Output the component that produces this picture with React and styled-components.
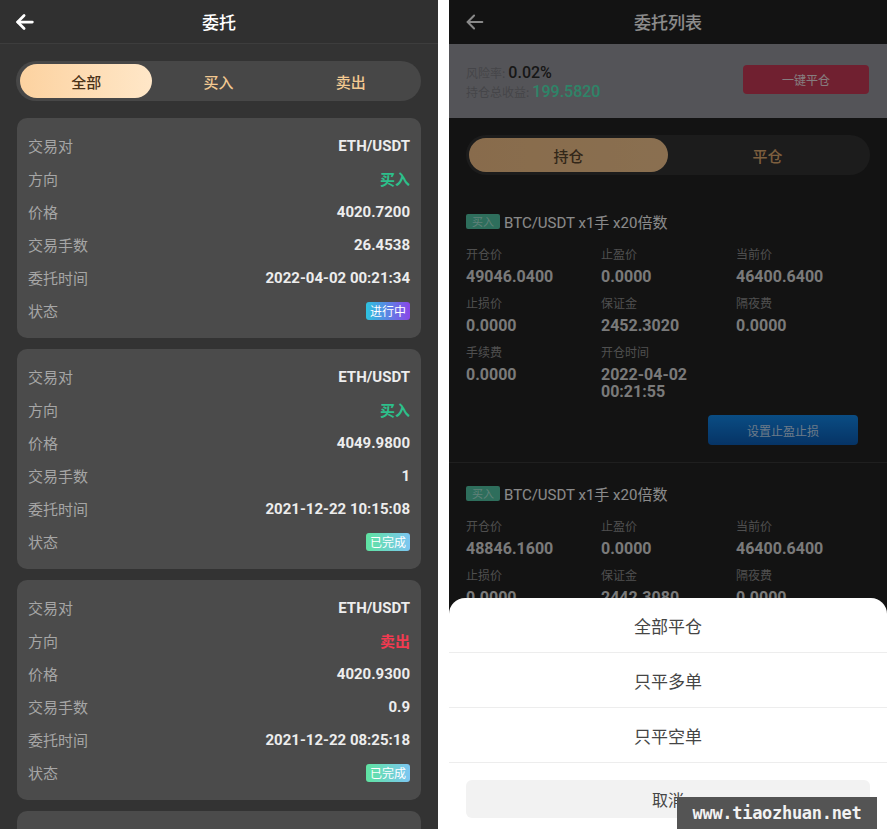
import React from "react";
import styled, { createGlobalStyle } from "styled-components";

const GlobalStyle = createGlobalStyle`
  html, body {
    margin: 0;
    padding: 0;
    background: #ffffff;
  }
  body {
    font-family: Roboto, "Noto Sans CJK SC", sans-serif;
  }
  * {
    box-sizing: border-box;
  }
`;

const Page = styled.div`
  display: flex;
  gap: 11px;
  width: 887px;
  height: 829px;
  overflow: hidden;
`;

/* ---------- left screen ---------- */

const LeftScreen = styled.div`
  width: 438px;
  height: 829px;
  background: #333333;
  overflow: hidden;
  display: flex;
  flex-direction: column;
`;

const Header = styled.div`
  height: 44px;
  flex-shrink: 0;
  position: relative;
  display: flex;
  align-items: center;
  justify-content: center;
  background: ${(p) => p.$bg};
  border-bottom: 1px solid ${(p) => p.$line};
`;

const BackButton = styled.div`
  position: absolute;
  left: ${(p) => p.$left}px;
  top: 11px;
  display: flex;
`;

const Title = styled.div`
  font-family: "Noto Sans CJK SC", sans-serif;
  font-size: 17px;
  font-weight: 500;
  color: ${(p) => p.$color};
`;

const LeftBody = styled.div`
  padding: 17px 17px 0 17px;
  display: flex;
  flex-direction: column;
`;

const FilterBar = styled.div`
  height: 40px;
  border-radius: 20px;
  background: #474747;
  padding: 3px 4px;
  display: grid;
  grid-template-columns: repeat(3, 1fr);
  margin-bottom: 17px;
  margin-left: -1px;
`;

const FilterTab = styled.div`
  display: flex;
  align-items: center;
  justify-content: center;
  border-radius: 17px;
  font-family: "Noto Sans CJK SC", sans-serif;
  font-size: 15px;
  font-weight: 500;
  color: ${(p) => (p.$active ? "#4a3218" : "#f3c991")};
  background: ${(p) =>
    p.$active ? "linear-gradient(90deg, #fcd2a0 0%, #ffe7c8 100%)" : "transparent"};
`;

const CardList = styled.div`
  display: flex;
  flex-direction: column;
  gap: 11px;
`;

const Card = styled.div`
  background: #4b4b4b;
  border-radius: 10px;
  padding: 11px 11px;
  flex-shrink: 0;
`;

const Row = styled.div`
  height: 33px;
  display: flex;
  align-items: center;
  justify-content: space-between;
`;

const Label = styled.span`
  font-family: "Noto Sans CJK SC", sans-serif;
  font-size: 15px;
  color: #a6a6a6;
`;

const Value = styled.span`
  font-family: Roboto, "Noto Sans CJK SC", sans-serif;
  font-size: 15px;
  font-weight: 700;
  color: ${(p) => p.$color || "#ededed"};
`;

const Badge = styled.span`
  height: 18px;
  padding: 0 4px;
  border-radius: 3px;
  display: inline-flex;
  align-items: center;
  font-family: "Noto Sans CJK SC", sans-serif;
  font-size: 12px;
  color: #ffffff;
  background: ${(p) =>
    p.$done
      ? "linear-gradient(90deg, #5fe3a1 0%, #7cc6f2 100%)"
      : "linear-gradient(90deg, #2dc3df 0%, #8b45e8 100%)"};
`;

/* ---------- right screen ---------- */

const RightScreen = styled.div`
  position: relative;
  width: 438px;
  height: 829px;
  background: #232323;
  overflow: hidden;
  display: flex;
  flex-direction: column;
`;

const RiskBox = styled.div`
  height: 74px;
  flex-shrink: 0;
  background: #9a9aa0;
  padding: 0 18px 0 17px;
  display: flex;
  align-items: center;
  justify-content: space-between;
`;

const RiskLines = styled.div`
  display: flex;
  flex-direction: column;
  padding-top: 2px;
`;

const RiskLine = styled.div`
  height: 19px;
  display: flex;
  align-items: center;
  gap: 3px;
`;

const RiskLabel = styled.span`
  font-family: "Noto Sans CJK SC", sans-serif;
  font-size: 12px;
  color: #7e7e85;
`;

const RiskValue = styled.span`
  font-family: Roboto, sans-serif;
  font-size: 16px;
  font-weight: 500;
  color: ${(p) => p.$color};
`;

const CloseAllButton = styled.div`
  width: 126px;
  height: 29px;
  border-radius: 4px;
  background: #cc3b58;
  display: flex;
  align-items: center;
  justify-content: center;
  font-family: "Noto Sans CJK SC", sans-serif;
  font-size: 12px;
  color: #f4e4e8;
  margin-top: -3px;
`;

const PosTabs = styled.div`
  margin: 17px 17px 16px 17px;
  height: 40px;
  border-radius: 20px;
  background: #333333;
  padding: 3px;
  display: grid;
  grid-template-columns: 1fr 1fr;
`;

const PosTab = styled.div`
  display: flex;
  align-items: center;
  justify-content: center;
  border-radius: 17px;
  font-family: "Noto Sans CJK SC", sans-serif;
  font-size: 15px;
  font-weight: 500;
  color: ${(p) => (p.$active ? "#5c472f" : "#e4ae74")};
  background: ${(p) =>
    p.$active ? "linear-gradient(90deg, #f8c48a 0%, #fbcb93 100%)" : "transparent"};
`;

const Position = styled.div`
  padding: 20px 29px 17px 17px;
  border-bottom: 1px solid #3a3a3a;
  display: flex;
  flex-direction: column;
`;

const PosTitle = styled.div`
  height: 20px;
  display: flex;
  align-items: center;
  gap: 4px;
  margin-bottom: 15px;
  font-family: Roboto, "Noto Sans CJK SC", sans-serif;
  font-size: 15px;
  color: #fbfbfb;
`;

const SideTag = styled.span`
  width: 34px;
  height: 15px;
  border-radius: 2px;
  background: #54c8a8;
  display: inline-flex;
  align-items: center;
  justify-content: center;
  font-family: "Noto Sans CJK SC", sans-serif;
  font-size: 11px;
  color: #b0ecdc;
`;

const PosGrid = styled.div`
  display: grid;
  grid-template-columns: 135px 135px 135px;
`;

const Cell = styled.div`
  display: flex;
  flex-direction: column;
  margin-bottom: 10px;
`;

const CellLabel = styled.span`
  font-family: "Noto Sans CJK SC", sans-serif;
  font-size: 12px;
  line-height: 16px;
  color: #909090;
  margin-bottom: 6px;
`;

const CellValue = styled.span`
  font-family: Roboto, sans-serif;
  font-size: 16px;
  font-weight: 700;
  line-height: 17px;
  color: #dedede;
`;

const StopButton = styled.div`
  align-self: flex-end;
  margin-top: 5px;
  width: 150px;
  height: 30px;
  border-radius: 4px;
  background: linear-gradient(180deg, #138cef 0%, #0c5fb9 100%);
  display: flex;
  align-items: center;
  justify-content: center;
  font-family: "Noto Sans CJK SC", sans-serif;
  font-size: 12px;
  color: #c4def8;
`;

const Mask = styled.div`
  position: absolute;
  top: 0;
  left: 0;
  width: 100%;
  height: 100%;
  z-index: 1;
  background-color: rgba(0, 0, 0, 0.45);
`;

const Sheet = styled.div`
  position: absolute;
  left: 0;
  right: 0;
  bottom: 0;
  z-index: 2;
  height: 231px;
  background: #ffffff;
  border-radius: 16px 16px 0 0;
  display: flex;
  flex-direction: column;
`;

const SheetItem = styled.div`
  height: 55px;
  flex-shrink: 0;
  display: flex;
  align-items: center;
  justify-content: center;
  border-bottom: 1px solid #ededed;
  font-family: "Noto Sans CJK SC", sans-serif;
  font-size: 17px;
  color: #454545;
`;

const CancelButton = styled.div`
  margin: 17px 17px 0 17px;
  height: 38px;
  border-radius: 6px;
  background: #f2f2f2;
  display: flex;
  align-items: center;
  justify-content: center;
  font-family: "Noto Sans CJK SC", sans-serif;
  font-size: 16px;
  color: #454545;
`;

const Watermark = styled.div`
  position: absolute;
  right: 10px;
  bottom: 0;
  z-index: 3;
  width: 200px;
  height: 32px;
  background: #545454;
  display: flex;
  align-items: center;
  justify-content: center;
  font-family: "DejaVu Sans Mono", "Liberation Mono", monospace;
  font-size: 17px;
  font-weight: 700;
  color: #f2f2f2;
  letter-spacing: -0.3px;
`;

const ArrowLeft = ({ color, width }) => (
  <svg width="22" height="22" viewBox="0 0 24 24" fill="none" stroke={color} strokeWidth={width} strokeLinecap="round" strokeLinejoin="round">
    <path d="M20 12H4" />
    <path d="M11 5l-7 7 7 7" />
  </svg>
);

const orders = [
  { pair: "ETH/USDT", side: "buy", price: "4020.7200", lots: "26.4538", time: "2022-04-02 00:21:34", done: false },
  { pair: "ETH/USDT", side: "buy", price: "4049.9800", lots: "1", time: "2021-12-22 10:15:08", done: true },
  { pair: "ETH/USDT", side: "sell", price: "4020.9300", lots: "0.9", time: "2021-12-22 08:25:18", done: true },
  { pair: "ETH/USDT", side: "buy", price: "4020.9300", lots: "0.9", time: "2021-12-22 08:20:11", done: true },
];

const positions = [
  {
    open: "49046.0400", profit: "0.0000", now: "46400.6400",
    loss: "0.0000", margin: "2452.3020", night: "0.0000",
    fee: "0.0000", time: "2022-04-02 00:21:55",
  },
  {
    open: "48846.1600", profit: "0.0000", now: "46400.6400",
    loss: "0.0000", margin: "2442.3080", night: "0.0000",
    fee: "0.0000", time: "2022-04-02 00:20:41",
  },
];

const OrderCard = ({ order }) => (
  <Card>
    <Row>
      <Label>交易对</Label>
      <Value>{order.pair}</Value>
    </Row>
    <Row>
      <Label>方向</Label>
      <Value $color={order.side === "buy" ? "#2dc08b" : "#f23a50"}>
        {order.side === "buy" ? "买入" : "卖出"}
      </Value>
    </Row>
    <Row>
      <Label>价格</Label>
      <Value>{order.price}</Value>
    </Row>
    <Row>
      <Label>交易手数</Label>
      <Value>{order.lots}</Value>
    </Row>
    <Row>
      <Label>委托时间</Label>
      <Value>{order.time}</Value>
    </Row>
    <Row>
      <Label>状态</Label>
      <Badge $done={order.done}>{order.done ? "已完成" : "进行中"}</Badge>
    </Row>
  </Card>
);

const PositionItem = ({ pos }) => (
  <Position>
    <PosTitle>
      <SideTag>买入</SideTag>
      BTC/USDT x1手 x20倍数
    </PosTitle>
    <PosGrid>
      <Cell><CellLabel>开仓价</CellLabel><CellValue>{pos.open}</CellValue></Cell>
      <Cell><CellLabel>止盈价</CellLabel><CellValue>{pos.profit}</CellValue></Cell>
      <Cell><CellLabel>当前价</CellLabel><CellValue>{pos.now}</CellValue></Cell>
      <Cell><CellLabel>止损价</CellLabel><CellValue>{pos.loss}</CellValue></Cell>
      <Cell><CellLabel>保证金</CellLabel><CellValue>{pos.margin}</CellValue></Cell>
      <Cell><CellLabel>隔夜费</CellLabel><CellValue>{pos.night}</CellValue></Cell>
      <Cell><CellLabel>手续费</CellLabel><CellValue>{pos.fee}</CellValue></Cell>
      <Cell><CellLabel>开仓时间</CellLabel><CellValue>{pos.time}</CellValue></Cell>
    </PosGrid>
    <StopButton>设置止盈止损</StopButton>
  </Position>
);

export default function App() {
  return (
    <Page>
      <GlobalStyle />
      <LeftScreen>
        <Header $bg="#303030" $line="#3d3d3d">
          <BackButton $left={14}>
            <ArrowLeft color="#ffffff" width={3} />
          </BackButton>
          <Title $color="#ffffff">委托</Title>
        </Header>
        <LeftBody>
          <FilterBar>
            <FilterTab $active>全部</FilterTab>
            <FilterTab>买入</FilterTab>
            <FilterTab>卖出</FilterTab>
          </FilterBar>
          <CardList>
            {orders.map((o, i) => (
              <OrderCard key={i} order={o} />
            ))}
          </CardList>
        </LeftBody>
      </LeftScreen>

      <RightScreen>
        <Header $bg="#232323" $line="#232323">
          <BackButton $left={15}>
            <ArrowLeft color="#fafafa" width={2.2} />
          </BackButton>
          <Title $color="#ffffff">委托列表</Title>
        </Header>
        <RiskBox>
          <RiskLines>
            <RiskLine>
              <RiskLabel>风险率:</RiskLabel>
              <RiskValue $color="#2a2a2a">0.02%</RiskValue>
            </RiskLine>
            <RiskLine>
              <RiskLabel>持仓总收益:</RiskLabel>
              <RiskValue $color="#54f0be">199.5820</RiskValue>
            </RiskLine>
          </RiskLines>
          <CloseAllButton>一键平仓</CloseAllButton>
        </RiskBox>
        <PosTabs>
          <PosTab $active>持仓</PosTab>
          <PosTab>平仓</PosTab>
        </PosTabs>
        {positions.map((p, i) => (
          <PositionItem key={i} pos={p} />
        ))}
        <Mask />
        <Sheet>
          <SheetItem>全部平仓</SheetItem>
          <SheetItem>只平多单</SheetItem>
          <SheetItem>只平空单</SheetItem>
          <CancelButton>取消</CancelButton>
        </Sheet>
        <Watermark>www.tiaozhuan.net</Watermark>
      </RightScreen>
    </Page>
  );
}
